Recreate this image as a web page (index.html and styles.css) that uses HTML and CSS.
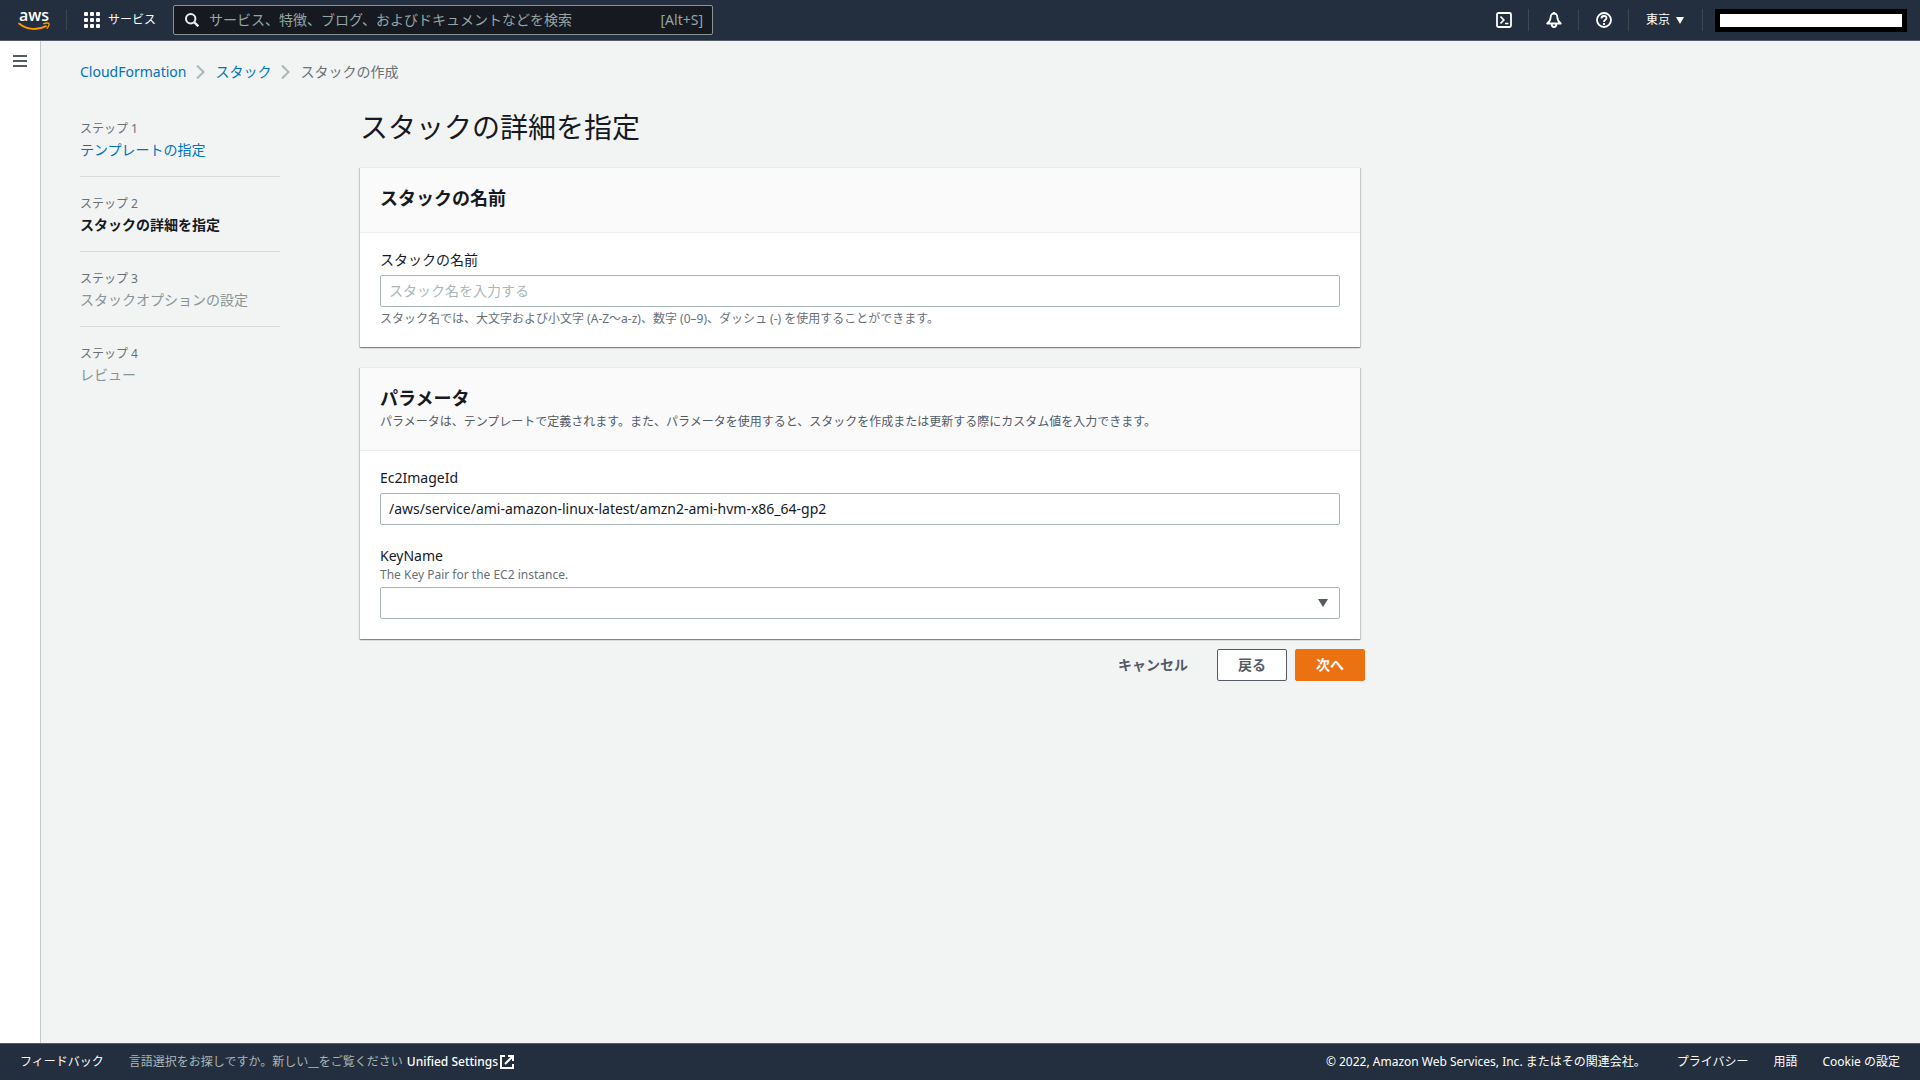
FILE: index.html
```html
<!DOCTYPE html>
<html lang="ja">
<head>
  <meta charset="UTF-8">
  <meta name="viewport" content="width=device-width, initial-scale=1.0">
  <title>CloudFormation - スタックの作成</title>
  <link rel="stylesheet" href="styles.css">
</head>
<body>
  <header class="topbar">
    <a class="logo" href="#" aria-label="aws">
      <svg width="34" height="30" viewBox="0 0 34 30">
        <text class="logo-text" x="17" y="16" text-anchor="middle">aws</text>
        <path d="M2 18.500c8.500 6.800 19 6.800 27 2.600" fill="none" stroke="#f90" stroke-width="1.800" stroke-linecap="round"/>
        <path d="M26.800 18.700c2-1 4.700-.8 5.100-.2.500.8-.2 3.300-1.800 4.700" fill="none" stroke="#f90" stroke-width="1.400" stroke-linecap="round"/>
      </svg>
    </a>
    <span class="separator"></span>
    <button class="services" type="button">
      <svg width="16" height="16" viewBox="0 0 16 16" fill="#fff">
        <rect width="4" height="4" rx="1"/><rect x="6" width="4" height="4" rx="1"/><rect x="12" width="4" height="4" rx="1"/>
        <rect y="6" width="4" height="4" rx="1"/><rect x="6" y="6" width="4" height="4" rx="1"/><rect x="12" y="6" width="4" height="4" rx="1"/>
        <rect y="12" width="4" height="4" rx="1"/><rect x="6" y="12" width="4" height="4" rx="1"/><rect x="12" y="12" width="4" height="4" rx="1"/>
      </svg>
      サービス
    </button>
    <label class="search">
      <svg width="14" height="14" viewBox="0 0 14 14" fill="none" stroke="#eaeded" stroke-width="2">
        <circle cx="5.700" cy="5.700" r="4.700"/>
        <path d="M9 9l4.300 4.300" stroke-width="2.400"/>
      </svg>
      <input type="search" aria-label="検索" placeholder="サービス、特徴、ブログ、およびドキュメントなどを検索">
      <span class="shortcut">[Alt+S]</span>
    </label>
    <div class="tools">
      <button class="tool" type="button" aria-label="CloudShell">
        <svg width="16" height="16" viewBox="0 0 16 16" fill="none" stroke="#fff" stroke-width="1.800">
          <rect x="1" y="1" width="14" height="14" rx="1.500"/>
          <path d="M4.500 4.500L7.800 8l-3.300 3.500M9 11.500h3.500" stroke-width="1.700"/>
        </svg>
      </button>
      <span class="separator"></span>
      <button class="tool" type="button" aria-label="通知">
        <svg width="16" height="16" viewBox="0 0 16 16" fill="none" stroke="#fff" stroke-width="1.800" stroke-linejoin="round">
          <path d="M8 1.500C5.900 1.500 4.700 3 4.700 5c0 2.800-1 4.600-3.500 6.500h13.600c-2.500-1.900-3.500-3.700-3.500-6.500 0-2-1.200-3.500-3.300-3.500z"/>
          <path d="M5.700 12c0 1.800.9 3 2.300 3s2.300-1.200 2.300-3M8 0v1.500"/>
        </svg>
      </button>
      <span class="separator"></span>
      <button class="tool" type="button" aria-label="ヘルプ">
        <svg width="16" height="16" viewBox="0 0 16 16" fill="none" stroke="#fff" stroke-width="1.800">
          <circle cx="8" cy="8" r="7"/>
          <path d="M5.500 6.400C5.500 4.800 6.500 4 8 4s2.500.8 2.500 2.100c0 1.700-2.500 1.700-2.500 3.800M8 11v2"/>
        </svg>
      </button>
      <span class="separator"></span>
      <button class="region" type="button">
        東京
        <svg width="8" height="7" viewBox="0 0 8 7" fill="#fff"><path d="M0 0h8L4 7z"/></svg>
      </button>
      <span class="separator"></span>
      <button class="account" type="button" aria-label="アカウント"></button>
    </div>
  </header>

  <div class="page">
    <aside class="sidebar">
      <button class="menu" type="button" aria-label="メニュー">
        <svg width="14" height="12" viewBox="0 0 14 12" fill="#545b64">
          <path d="M0 0h14v2H0zM0 5h14v2H0zM0 10h14v2H0z"/>
        </svg>
      </button>
    </aside>

    <div class="content">
      <nav class="breadcrumb">
        <a href="#">CloudFormation</a>
        <svg width="9" height="14" viewBox="0 0 9 14" fill="none" stroke="#aab7b8" stroke-width="2"><path d="M1 0.500L7.500 7 1 13.500"/></svg>
        <a href="#">スタック</a>
        <svg width="9" height="14" viewBox="0 0 9 14" fill="none" stroke="#aab7b8" stroke-width="2"><path d="M1 0.500L7.500 7 1 13.500"/></svg>
        <span>スタックの作成</span>
      </nav>

      <div class="wizard">
        <ol class="steps">
          <li class="step">
            <small>ステップ 1</small>
            <a href="#">テンプレートの指定</a>
          </li>
          <li class="step active">
            <small>ステップ 2</small>
            <span>スタックの詳細を指定</span>
          </li>
          <li class="step">
            <small>ステップ 3</small>
            <span>スタックオプションの設定</span>
          </li>
          <li class="step">
            <small>ステップ 4</small>
            <span>レビュー</span>
          </li>
        </ol>

        <main class="main">
          <h1>スタックの詳細を指定</h1>
          <form>
            <section class="card">
              <div class="card-header">
                <h2>スタックの名前</h2>
              </div>
              <div class="card-body">
                <div class="field">
                  <label for="stack-name">スタックの名前</label>
                  <input class="control" id="stack-name" type="text" placeholder="スタック名を入力する">
                  <p class="hint">スタック名では、大文字および小文字 (A-Z～a-z)、数字 (0–9)、ダッシュ (-) を使用することができます。</p>
                </div>
              </div>
            </section>

            <section class="card">
              <div class="card-header">
                <h2>パラメータ</h2>
                <p>パラメータは、テンプレートで定義されます。また、パラメータを使用すると、スタックを作成または更新する際にカスタム値を入力できます。</p>
              </div>
              <div class="card-body">
                <div class="field">
                  <label for="image-id">Ec2ImageId</label>
                  <input class="control" id="image-id" type="text" value="/aws/service/ami-amazon-linux-latest/amzn2-ami-hvm-x86_64-gp2">
                </div>
                <div class="field">
                  <label for="key-name">KeyName</label>
                  <p class="description">The Key Pair for the EC2 instance.</p>
                  <select class="control" id="key-name">
                    <option value=""></option>
                  </select>
                </div>
              </div>
            </section>

            <div class="actions">
              <button class="btn link" type="button">キャンセル</button>
              <button class="btn" type="button">戻る</button>
              <button class="btn primary" type="submit">次へ</button>
            </div>
          </form>
        </main>
      </div>
    </div>
  </div>

  <footer class="footer">
    <a href="#">フィードバック</a>
    <p class="language">
      言語選択をお探しですか。新しい__をご覧ください
      <a href="#">Unified Settings
        <svg width="14" height="14" viewBox="0 0 14 14" fill="none" stroke="#fff" stroke-width="2"><path d="M5 1H1v12h12V9M8 1h5v5M13 1L5 9"/></svg>
      </a>
    </p>
    <span class="copyright">© 2022, Amazon Web Services, Inc. またはその関連会社。</span>
    <a href="#">プライバシー</a>
    <a href="#">用語</a>
    <a href="#">Cookie の設定</a>
  </footer>
</body>
</html>
```
FILE: styles.css
```css
* {
  box-sizing: border-box;
}
body {
  margin: 0;
  min-height: 100vh;
  display: flex;
  flex-direction: column;
  font-family: "Noto Sans", "Noto Sans CJK JP", sans-serif;
  font-size: 14px;
  line-height: 22px;
  color: #16191f;
  background-color: #f2f3f3;
}
h1, h2, p, ol {
  margin: 0;
  padding: 0;
}
button, input, select {
  font: inherit;
}
button {
  padding: 0;
  border: none;
  background: none;
  color: inherit;
  cursor: pointer;
}
a {
  color: #0073bb;
  text-decoration: none;
}
svg {
  flex: none;
}

/* Header */
.topbar {
  display: flex;
  align-items: center;
  height: 41px;
  padding: 0 13px 0 17px;
  background-color: #232f3e;
  border-bottom: 1px solid #545b64;
  color: #fff;
  font-size: 12px;
}
.logo {
  display: flex;
  margin-right: 15px;
}
.logo-text {
  font-family: "Open Sans", sans-serif;
  font-size: 16px;
  font-weight: 600;
  fill: #fff;
}
.separator {
  width: 1px;
  height: 22px;
  background-color: #414750;
}
.services {
  display: flex;
  align-items: center;
  gap: 8px;
  margin: 0 17px;
}
.search {
  display: flex;
  align-items: center;
  gap: 10px;
  flex: 0 1 540px;
  height: 30px;
  padding: 0 9px 0 11px;
  border: 1px solid #879596;
  border-radius: 2px;
  background-color: #16191f;
  color: #95a5a6;
  font-size: 14px;
}
.search input {
  flex: 1;
  min-width: 0;
  padding: 0;
  border: none;
  outline: none;
  background: none;
  color: #fff;
}
.search input::placeholder {
  color: #95a5a6;
}
.tools {
  display: flex;
  align-items: center;
  margin-left: auto;
}
.tool {
  display: flex;
  margin: 0 16px 0 17px;
}
.region {
  display: flex;
  align-items: center;
  gap: 6px;
  margin: 0 18px 0 17px;
}
.account {
  width: 192px;
  height: 23px;
  margin-left: 12px;
  border: 5px solid #000;
  background-color: #fff;
}

/* Page */
.page {
  display: flex;
  flex: 1;
}
.sidebar {
  flex: none;
  width: 40px;
  padding: 14px 13px;
  background-color: #fff;
  box-shadow: 1px 0 0 #c4caca;
}
.menu {
  display: flex;
}
.content {
  flex: 1;
  padding: 20px 40px;
}
.breadcrumb {
  display: flex;
  align-items: center;
  gap: 10px;
  margin-bottom: 28px;
  color: #687078;
}
.wizard {
  display: flex;
  gap: 80px;
}
.steps {
  flex: none;
  width: 200px;
  padding-top: 8px;
  list-style: none;
}
.step {
  display: flex;
  flex-direction: column;
  padding-bottom: 15px;
  color: #879596;
}
.step + .step {
  padding-top: 17px;
  border-top: 1px solid #d5dbdb;
}
.step small {
  font-size: 12px;
  line-height: 20px;
  font-weight: normal;
  color: #687078;
}
.step.active {
  color: #16191f;
  font-weight: bold;
}
.main {
  flex: 1;
  max-width: 1000px;
}
h1 {
  margin-bottom: 24px;
  font-size: 28px;
  font-weight: normal;
  line-height: 32px;
}

/* Cards */
.card {
  margin-bottom: 20px;
  border-top: 1px solid #eaeded;
  background-color: #fff;
  box-shadow: 0 1px 1px 0 rgba(0, 28, 36, 0.3), 1px 1px 1px 0 rgba(0, 28, 36, 0.15), -1px 1px 1px 0 rgba(0, 28, 36, 0.15);
}
.card-header {
  padding: 15px 20px 19px;
  border-bottom: 1px solid #eaeded;
  background-color: #fafafa;
}
.card-header h2 {
  font-size: 18px;
  line-height: 30px;
}
.card-header p {
  font-size: 12px;
  line-height: 18px;
  color: #545b64;
}
.card-body {
  display: flex;
  flex-direction: column;
  gap: 20px;
  padding: 16px 20px 20px;
}
.field label {
  display: block;
}
.control {
  display: block;
  width: 100%;
  height: 32px;
  margin-top: 4px;
  padding: 3px 8px 5px;
  border: 1px solid #aab7b8;
  border-radius: 2px;
  background-color: #fff;
  color: #16191f;
}
.control::placeholder {
  color: #aab7b8;
}
select.control {
  appearance: none;
  background-image: url("data:image/svg+xml,%3Csvg xmlns='http://www.w3.org/2000/svg' width='10' height='8'%3E%3Cpath d='M0 0h10L5 8z' fill='%23545b64'/%3E%3C/svg%3E");
  background-repeat: no-repeat;
  background-position: right 11px center;
}
.hint, .description {
  font-size: 12px;
  line-height: 16px;
  color: #687078;
}
.hint {
  margin-top: 4px;
}

/* Buttons */
.actions {
  display: flex;
  justify-content: flex-end;
  gap: 8px;
  margin: -10px -5px 0 0;
}
.btn {
  height: 32px;
  padding: 0 20px;
  border: 1px solid #545b64;
  border-radius: 2px;
  background-color: #fff;
  color: #545b64;
  font-weight: bold;
}
.btn.link {
  border-color: transparent;
  background-color: transparent;
}
.btn.primary {
  border-color: #ec7211;
  background-color: #ec7211;
  color: #fff;
}

/* Footer */
.footer {
  display: flex;
  align-items: center;
  gap: 25px;
  height: 37px;
  padding: 0 20px;
  border-top: 1px solid #545b64;
  background-color: #232f3e;
  color: #fff;
  font-size: 12px;
}
.footer a {
  color: #fff;
}
.language {
  display: flex;
  gap: 4px;
  margin-right: auto;
  color: #aab7b8;
}
.language a {
  display: flex;
  align-items: center;
  gap: 2px;
  font-weight: 500;
}
.copyright {
  margin-right: 6px;
}
```
